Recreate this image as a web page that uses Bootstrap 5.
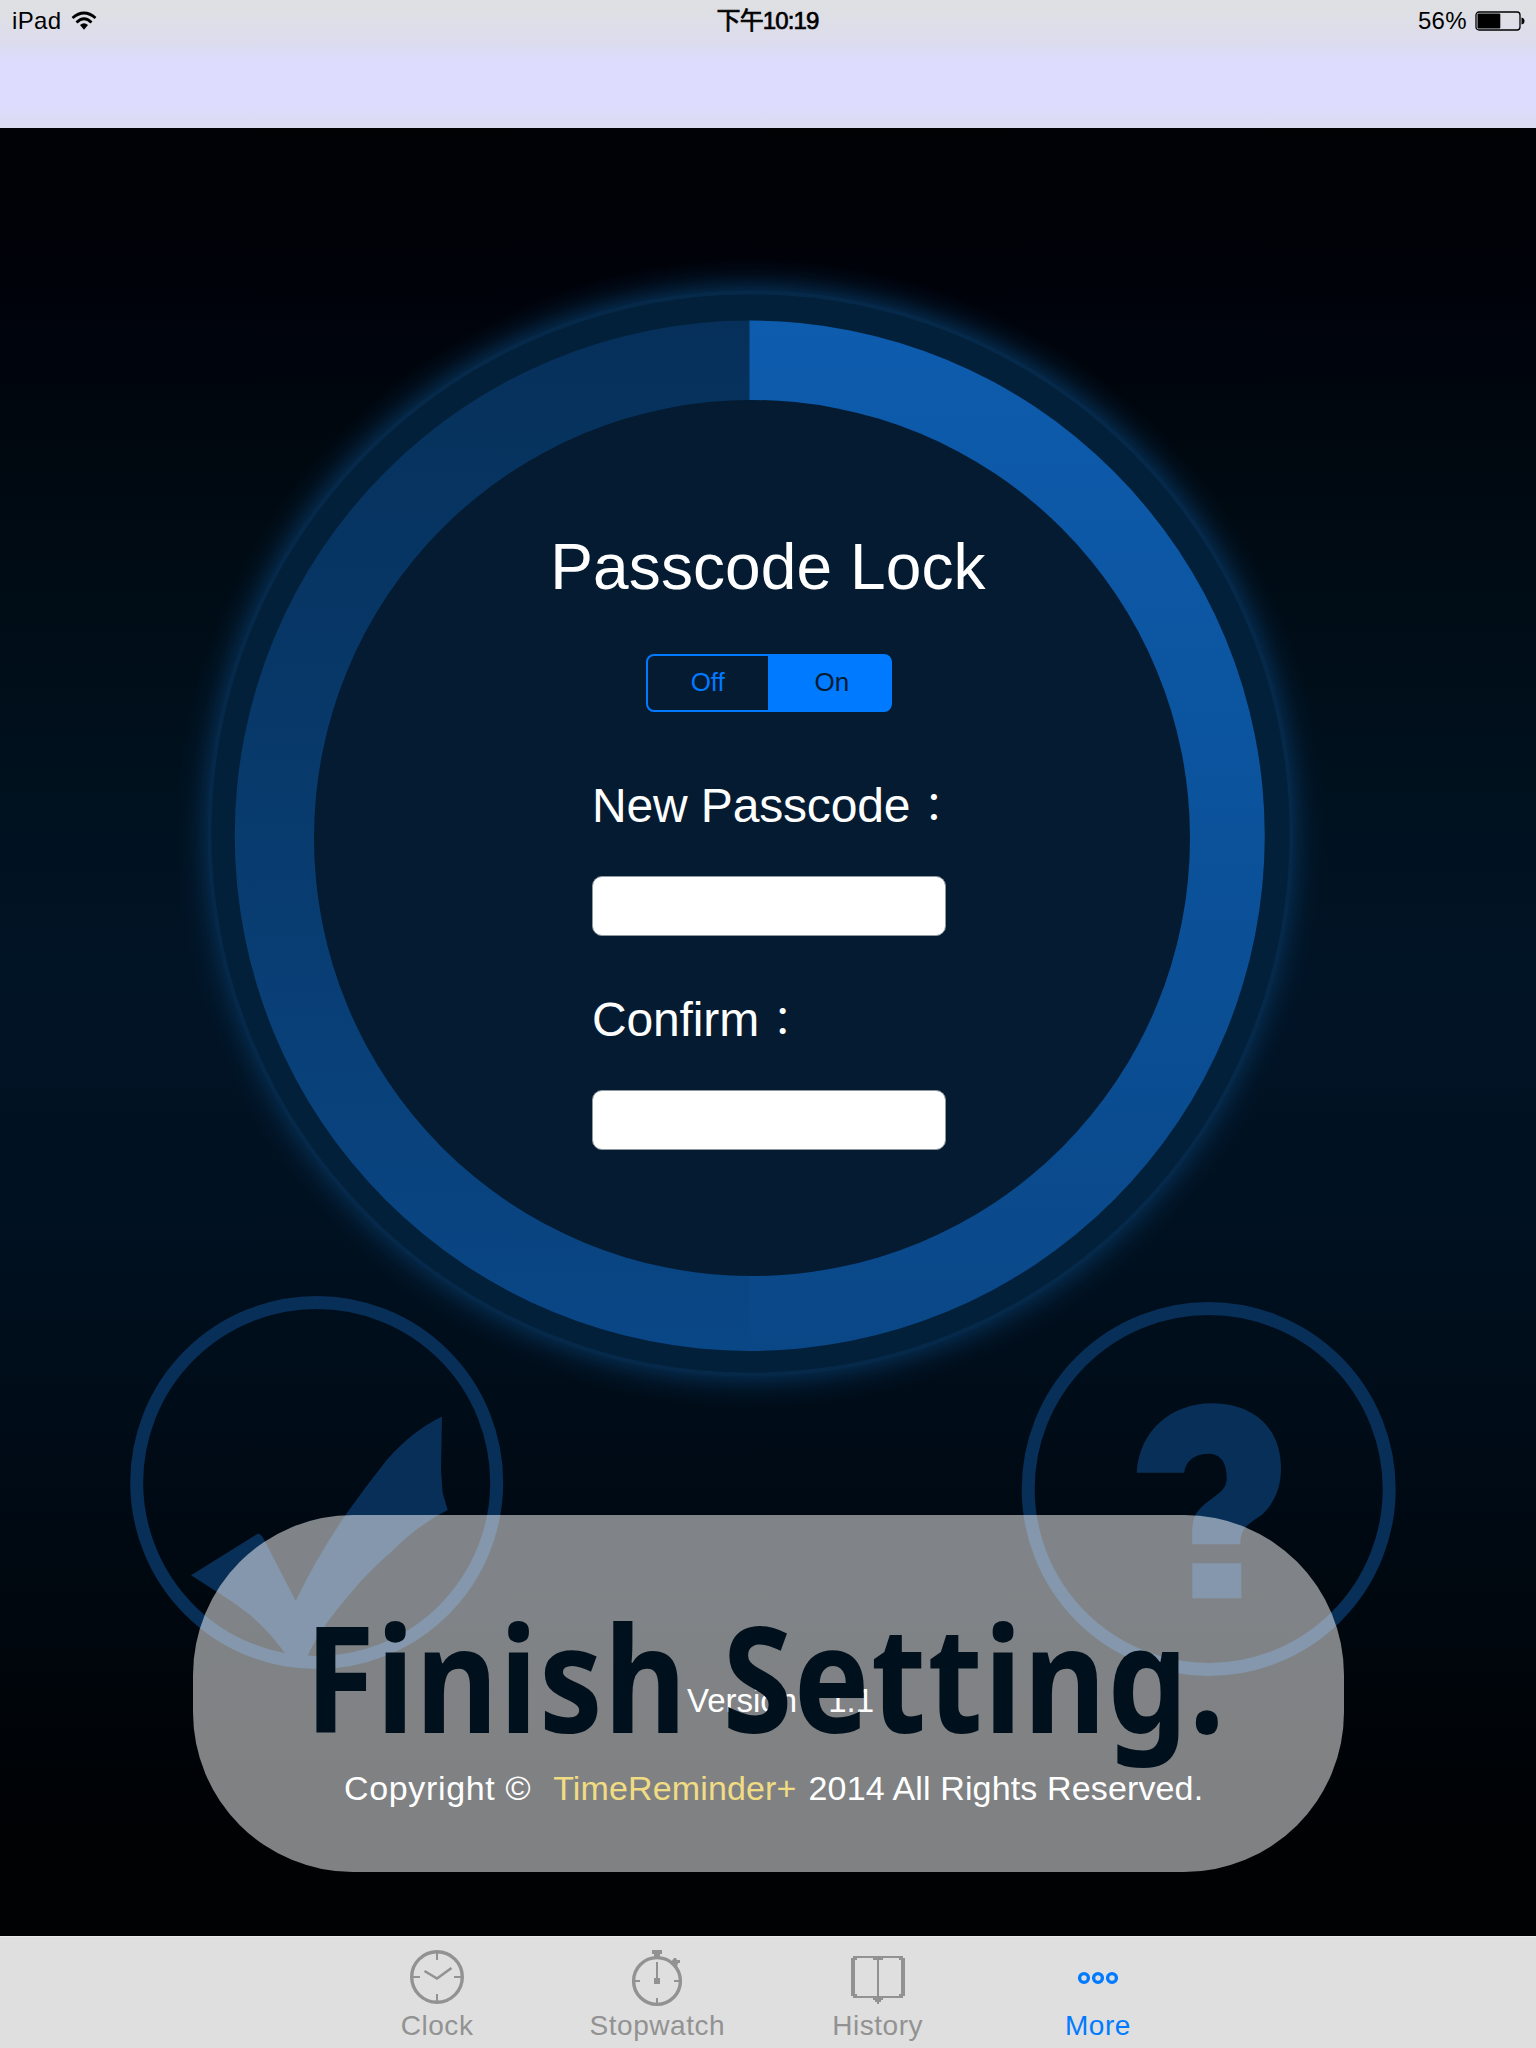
<!DOCTYPE html>
<html lang="en">
<head>
<meta charset="utf-8">
<meta name="viewport" content="width=device-width, initial-scale=1">
<title>TimeReminder+ Passcode Lock</title>
<link href="https://cdn.jsdelivr.net/npm/bootstrap@5.3.0/dist/css/bootstrap.min.css" rel="stylesheet">
<style>
  body { width: 1536px; height: 2048px; overflow: hidden; background: #000; font-family: "Liberation Sans", "Noto Sans CJK TC", sans-serif; }
  .top-area { height: 128px; background: linear-gradient(#dfe0e2 0, #dfe0e2 6px, #dcdcf0 46px, #dddcfe 62px, #dddcfe 102px, #dcdcf3 128px); }
  .status-row { height: 41px; padding: 0 11px 0 12px; font-size: 24px; line-height: 41px; color: #000; letter-spacing: .35px; }
  .status-side { width: 300px; }
  .status-time { -webkit-text-stroke: .7px #000; letter-spacing: -.9px; margin-right: 2px; }
  .wifi-mark { margin-left: 10px; }
  .stage { height: 1808px; background: linear-gradient(#000204 0, #00020a 160px, #000a12 380px, #001220 700px, #011426 850px, #00101f 1130px, #000a14 1370px, #00050a 1570px, #000204 1700px, #000204 100%); }
  .scene { z-index: 0; }
  .content-col { z-index: 1; padding-top: 399px; color: #fff; }
  .lock-title { font-size: 64px; line-height: 80px; font-weight: 400; letter-spacing: .1px; margin: 0 0 47px 0; }
  .seg { width: 246px; height: 58px; margin-left: 2px; }
  .seg .btn { --bs-btn-color: #007aff; --bs-btn-border-color: #007aff; --bs-btn-bg: transparent; --bs-btn-active-bg: #007aff; --bs-btn-active-border-color: #007aff; --bs-btn-active-color: #041b31; border-width: 2px; border-radius: 8px; font-size: 26px; line-height: 51px; padding: 0 0 2px; width: 50%; }
  .seg .btn.active { padding-left: 3px; }
  .fields { width: 354px; margin: 64px 0 0 2px; }
  .field-name { font-size: 48px; line-height: 60px; margin-bottom: 40px; letter-spacing: -.15px; white-space: nowrap; }
  .wide-colon { display: inline-block; width: 1.2em; text-align: center; font-size: .82em; font-weight: 400; line-height: 1; }
  .fields .form-control { height: 60px; border-radius: 10px; border: 1px solid #8f979f; background: #fff; padding: 0 12px; font-size: 30px; }
  .fields .field-gap { margin-top: 54px; }
  .version-line { margin: 531px 0 0 25px; font-size: 33px; line-height: 40px; white-space: nowrap; }
  .version-line .wide-colon { width: 1.15em; }
  .copy-line { margin: 47px 0 0 14px; font-size: 34px; line-height: 40px; white-space: nowrap; width: 862px; letter-spacing: .14px; }
  .copy-word { letter-spacing: .65px; margin-right: 22px; }
  .brand-name { color: #e1b905; margin-right: 12px; }
  .hud { z-index: 2; left: 193px; top: 1387px; width: 1151px; height: 357px; border-radius: 160px; background: rgba(255,255,255,.5); color: #00101c; font-family: "Noto Sans", sans-serif; font-weight: 700; font-size: 147px; line-height: 323px; white-space: nowrap; padding-right: 5px; }
  .hud-text { display: inline-block; transform: scaleX(.863); margin: 0 -100px; letter-spacing: 1.7px; }
  .tabs-bar { height: 112px; background: #dfdfdf; border-top: 1px solid #ececec; font-size: 28px; letter-spacing: .55px; padding-right: 1px; }
  .tabs-bar .nav-link { width: 220.3px; padding: 9px 0 0; color: #929292; line-height: 36px; }
  .tabs-bar .nav-link.active { color: #007aff; }
  .tabs-bar svg { display: block; margin: 0 auto -2px; }
</style>
<script src="https://cdn.jsdelivr.net/npm/bootstrap@5.3.0/dist/js/bootstrap.bundle.min.js"></script>
</head>
<body>
<header class="top-area">
  <div class="status-row d-flex justify-content-between">
    <div class="status-side d-flex align-items-center">
      <span>iPad</span>
      <svg class="wifi-mark" width="26" height="20" viewBox="0 0 26 20">
        <path d="M1.500 7Q13-3 24.500 7" fill="none" stroke="#000" stroke-width="2.900"/>
        <path d="M5.500 11.500Q13 3.900 20.500 11.500" fill="none" stroke="#000" stroke-width="2.900"/>
        <path d="M9 14Q13 10.500 17 14L13 18.800Z"/>
      </svg>
    </div>
    <div class="status-time">下午10:19</div>
    <div class="status-side d-flex align-items-center justify-content-end">
      <span>56%</span>
      <svg class="ms-2" width="50" height="20" viewBox="0 0 50 20">
        <rect x="1" y="1" width="44" height="18" rx="3" fill="none" stroke="#000" stroke-width="1.300"/>
        <rect x="2.500" y="2.500" width="22.800" height="15" rx="1" fill="#000"/>
        <path d="M46.500 6.500Q49.500 7 49.500 10T46.500 13.500Z"/>
      </svg>
    </div>
  </div>
</header>

<main class="stage position-relative overflow-hidden">
  <svg class="scene position-absolute top-0 start-0" width="1536" height="1808" viewBox="0 128 1536 1808">
    <defs>
      <radialGradient id="halo" gradientUnits="userSpaceOnUse" cx="750.5" cy="833.5" r="575">
        <stop offset=".94" stop-color="#04284a"/>
        <stop offset=".955" stop-color="#04233f" stop-opacity=".75"/>
        <stop offset=".975" stop-color="#031d36" stop-opacity=".33"/>
        <stop offset="1" stop-color="#031830" stop-opacity="0"/>
      </radialGradient>
      <linearGradient id="ringRight" x1="0" y1="0" x2="0" y2="1">
        <stop offset="0" stop-color="#0e5cae"/><stop offset=".5" stop-color="#0b529b"/><stop offset="1" stop-color="#0a4787"/>
      </linearGradient>
      <linearGradient id="ringLeft" x1="0" y1="0" x2="0" y2="1">
        <stop offset="0" stop-color="#06305a"/><stop offset=".5" stop-color="#083b6e"/><stop offset="1" stop-color="#0a4787"/>
      </linearGradient>
    </defs>
    <circle cx="750.5" cy="833.5" r="575" fill="url(#halo)"/>
    <circle cx="750.5" cy="833.5" r="541" fill="#02203a" stroke="#06294a" stroke-width="4"/>
    <path d="M750 320.500A515 515 0 0 0 750 1351Z" fill="url(#ringLeft)"/>
    <path d="M749.500 320.500A515.250 515.250 0 0 1 749.500 1351Z" fill="url(#ringRight)"/>
    <circle cx="752" cy="838" r="438" fill="#041b31"/>
    <g fill="none" stroke="#082f58" stroke-width="13">
      <circle cx="316.700" cy="1482.500" r="180"/>
      <circle cx="1208.700" cy="1489" r="180.500"/>
    </g>
    <g fill="#082f58">
      <path d="M191 1575.300L258 1533.500Q261 1534 263.300 1538.300L295.700 1600.700Q318 1555 346.700 1513.300Q366 1486 386.700 1460Q412 1431 442 1416.500L441 1470L442.700 1493L447.700 1510Q418 1525 393.300 1550Q367 1573 353.300 1590Q337 1609 326.700 1623.300Q315 1639 306.700 1658L287 1656Q270 1632 250 1615Q234 1602 216.700 1591.700Z"/>
      <path d="M1136.700 1472.700C1139 1430 1172 1403.500 1211.700 1403.300C1255 1403.500 1281 1429 1281 1468.300C1281 1490 1273 1504 1261.700 1515C1247 1525 1240.500 1528 1240.300 1544.300H1192.300C1191.500 1518 1193 1513 1210 1500C1221 1492 1226.700 1488 1226.700 1478C1226.700 1461 1220 1453.700 1207.700 1453.700C1194 1453.700 1185 1462 1184.300 1472.700Z"/>
      <rect x="1192.300" y="1563.300" width="49" height="35"/>
    </g>
  </svg>

  <div class="content-col position-relative d-flex flex-column align-items-center">
    <h1 class="lock-title">Passcode Lock</h1>
    <div class="seg btn-group" role="group">
      <button type="button" class="btn">Off</button>
      <button type="button" class="btn active">On</button>
    </div>
    <form class="fields">
      <label class="field-name d-block" for="newPass">New Passcode<span class="wide-colon">：</span></label>
      <input class="form-control" type="password" id="newPass">
      <label class="field-name field-gap d-block" for="confirmPass">Confirm<span class="wide-colon">：</span></label>
      <input class="form-control" type="password" id="confirmPass">
    </form>
    <div class="version-line">Version<span class="wide-colon">：</span>1.1</div>
    <div class="copy-line d-flex">
      <span class="copy-word">Copyright ©</span>
      <span class="brand-name">TimeReminder+</span>
      <span>2014 All Rights Reserved.</span>
    </div>
  </div>

  <div class="hud position-absolute text-center"><span class="hud-text">Finish Setting.</span></div>
</main>

<nav class="tabs-bar nav justify-content-center">
  <a class="nav-link text-center" href="#">
    <svg width="60" height="64" viewBox="0 0 60 64" fill="none" stroke="#929292">
      <circle cx="30" cy="31" r="25.300" stroke-width="3.400"/>
      <path d="M30 7v7M30 48v7M5 31h8M47 31h8" stroke-width="2"/>
      <path d="M17.500 25l12.500 7.500L44.500 22" stroke-width="2.600"/>
    </svg>Clock
  </a>
  <a class="nav-link text-center" href="#">
    <svg width="60" height="64" viewBox="0 0 60 64" fill="none" stroke="#929292">
      <circle cx="30" cy="35" r="23.400" stroke-width="3.400"/>
      <path d="M30 16v17M30 52v6M7 35h6M47 35h6" stroke-width="2"/>
      <path d="M25 4h10v4h-2v3h-6V8H25zM44 16l3-4h2l1 2h3v3h-2l-1 4zM27 32h6v6h-6z" fill="#929292" stroke="none"/>
    </svg>Stopwatch
  </a>
  <a class="nav-link text-center" href="#">
    <svg width="60" height="64" viewBox="0 0 60 64" fill="#929292">
      <path fill-rule="evenodd" d="M5 10h50v2h2v38h-2v2H35v2h-2v2h-2v2h-2v-2h-2v-2h-2v-2H5v-2H3V12h2zM9 12v2H7v34h2v2h20V14h-4v-2zM35 12v2h-4v36h20v-2h2V14h-2v-2z"/>
    </svg>History
  </a>
  <a class="nav-link active text-center" href="#">
    <svg width="60" height="64" viewBox="0 0 60 64" fill="none" stroke="#007aff" stroke-width="3.400">
      <circle cx="16" cy="32" r="4.400"/><circle cx="30" cy="32" r="4.400"/><circle cx="44" cy="32" r="4.400"/>
    </svg>More
  </a>
</nav>
</body>
</html>
